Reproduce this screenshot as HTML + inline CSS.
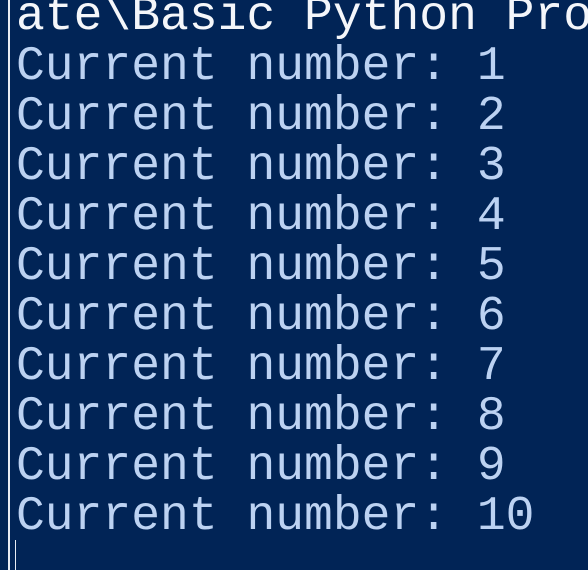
<!DOCTYPE html>
<html><head><meta charset="utf-8"><style>
html,body{margin:0;padding:0;width:588px;height:570px;overflow:hidden;background:#012456;}
.t{position:absolute;left:16px;top:-8px;font-family:"Liberation Mono","DejaVu Sans Mono",monospace;font-size:48px;line-height:50px;color:#bcd2f2;white-space:pre;}
.w{color:#f4f6fa;}
.bar{position:absolute;left:8px;top:0;width:2px;height:570px;background:#e8ecf4;}
.cur{position:absolute;left:15px;top:540px;width:1px;height:30px;background:#e8ecf4;}
</style></head><body>
<div class="bar"></div>
<div class="t"><span class="w">ate\Basic Python Pro</span>
Current number: 1
Current number: 2
Current number: 3
Current number: 4
Current number: 5
Current number: 6
Current number: 7
Current number: 8
Current number: 9
Current number: 10</div>
<div class="cur"></div>
</body></html>
